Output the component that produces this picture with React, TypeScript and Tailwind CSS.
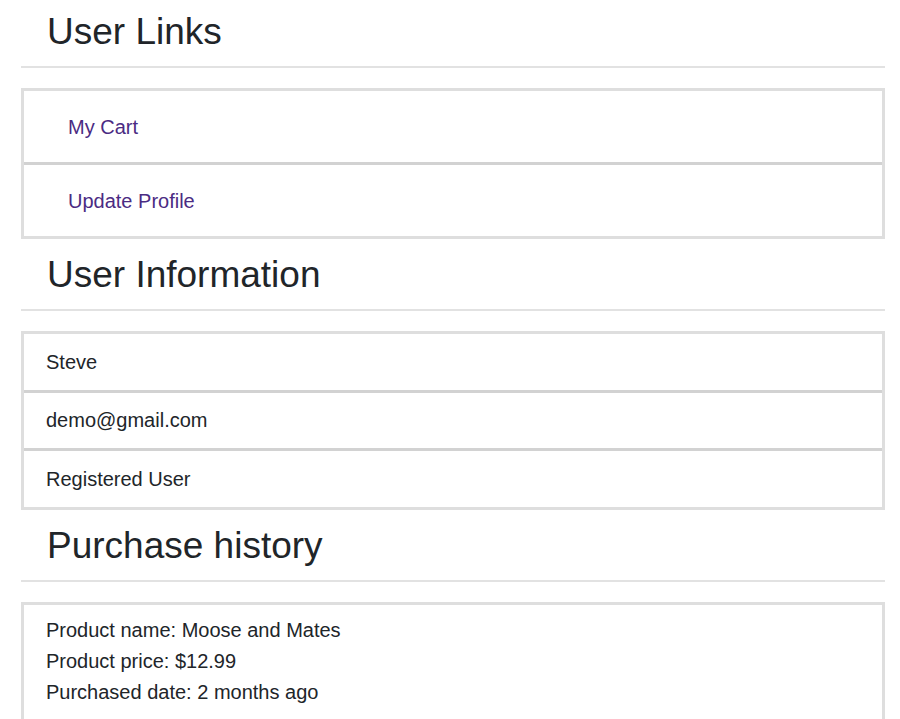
import React from 'react';

const links = ['My Cart', 'Update Profile'];
const info = ['Steve', 'demo@gmail.com', 'Registered User'];

function SectionHead({ title, first }: { title: string; first?: boolean }) {
    return (
        <div className={first ? 'pt-[10px]' : 'pt-[14px]'}>
            <h2 className="pl-[26px] text-[37px] leading-[44px] text-[#212529] font-normal">{title}</h2>
            <div className="mt-[12px] mb-[20px] h-[2px] bg-[#e2e2e2]" />
        </div>
    );
}

export default function App() {
    return (
        <div className="min-h-screen bg-white font-['Liberation_Sans',Arial,sans-serif]">
            <div className="ml-[21px] w-[864px]">
                <SectionHead title="User Links" first />
                <div className="border-[3px] border-[#dedede] divide-y-[3px] divide-[#d2d2d2]">
                    {links.map((l) => (
                        <div key={l} className="box-content h-[71px] flex items-center pl-[44px]">
                            <a href="#" className="text-[20px] leading-[30px] text-[#4b2b83]">{l}</a>
                        </div>
                    ))}
                </div>

                <SectionHead title="User Information" />
                <div className="border-[3px] border-[#dedede] divide-y-[3px] divide-[#d2d2d2]">
                    {info.map((t) => (
                        <div key={t} className="box-content h-[55.5px] flex items-center pl-[22px] text-[20px] leading-[30px] text-[#212529]">
                            {t}
                        </div>
                    ))}
                </div>

                <SectionHead title="Purchase history" />
                <div className="border-[3px] border-[#dedede] pt-[10px] pb-[30px] pl-[22px] text-[20px] leading-[31px] text-[#212529]">
                    <p>Product name: Moose and Mates</p>
                    <p>Product price: $12.99</p>
                    <p>Purchased date: 2 months ago</p>
                </div>
            </div>
        </div>
    );
}
